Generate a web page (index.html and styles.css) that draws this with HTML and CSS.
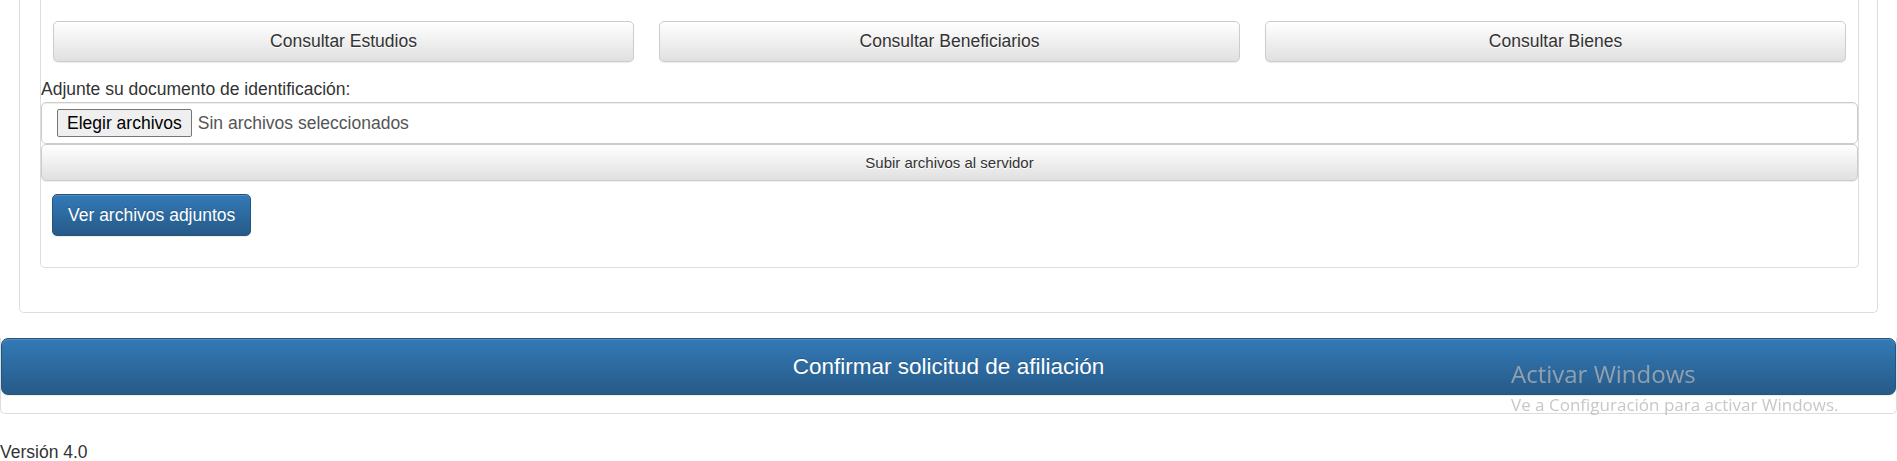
FILE: index.html
```html
<!DOCTYPE html>
<html lang="es">
<head>
<meta charset="utf-8">
<title>Solicitud de afiliación</title>
<link rel="stylesheet" href="styles.css">
</head>
<body>
<div class="page">
  <div class="outer-panel">
    <div class="inner-panel">
      <div class="btn-row">
        <button class="btn btn-default query-btn">Consultar Estudios</button>
        <button class="btn btn-default query-btn">Consultar Beneficiarios</button>
        <button class="btn btn-default query-btn">Consultar Bienes</button>
      </div>
      <label class="doc-label">Adjunte su documento de identificación:</label>
      <div class="file-box">
        <span class="file-btn">Elegir archivos</span>
        <span class="file-text">Sin archivos seleccionados</span>
      </div>
      <button class="btn btn-default upload-btn">Subir archivos al servidor</button>
      <button class="btn btn-primary view-btn">Ver archivos adjuntos</button>
    </div>
  </div>
  <div class="confirm-box">
    <button class="btn btn-primary confirm-btn">Confirmar solicitud de afiliación</button>
  </div>
  <div class="version">Versión 4.0</div>
</div>
<div class="watermark">
  <div class="wm-title">Activar Windows</div>
  <div class="wm-sub">Ve a Configuración para activar Windows.</div>
</div>
</body>
</html>
```
FILE: styles.css
```css
* {
  box-sizing: border-box;
}

html, body {
  margin: 0;
  background: #fff;
}

body {
  font-family: "Liberation Sans", Arial, Helvetica, sans-serif;
  font-size: 17.5px;
  line-height: 25px;
  color: #333;
  overflow: hidden;
}

.outer-panel {
  margin: 0 19px;
  border: 1px solid #dddddd;
  border-top: 0;
  border-radius: 0 0 5px 5px;
  padding: 0 18px 44px 20px;
}

.inner-panel {
  border: 1px solid #dddddd;
  border-top: 0;
  border-radius: 0 0 5px 5px;
  padding: 21px 0 31px;
  display: flex;
  flex-direction: column;
  align-items: flex-start;
}

.btn {
  font-family: inherit;
  font-size: 17.5px;
  line-height: 25px;
  border: 1px solid transparent;
  border-radius: 5px;
  padding: 7px 15px;
  text-align: center;
  white-space: nowrap;
  cursor: pointer;
  margin: 0;
}

.btn-default {
  color: #333;
  background: linear-gradient(to bottom, #ffffff 0%, #e0e0e0 100%);
  border-color: #cccccc;
  box-shadow: inset 0 1px 0 rgba(255, 255, 255, 0.15), 0 1px 1px rgba(0, 0, 0, 0.075);
  text-shadow: 0 1px 0 #fff;
}

.btn-primary {
  color: #fff;
  background: linear-gradient(to bottom, #337ab7 0%, #265a88 100%);
  border-color: #245580;
  box-shadow: inset 0 1px 0 rgba(255, 255, 255, 0.15), 0 1px 1px rgba(0, 0, 0, 0.075);
  text-shadow: 0 -1px 0 rgba(0, 0, 0, 0.2);
}

.btn-row {
  width: 100%;
  display: grid;
  grid-template-columns: repeat(3, 1fr);
  gap: 25px;
  padding: 0 12px;
}

.query-btn {
  height: 41px;
  width: 100%;
}

.doc-label {
  display: block;
  margin-top: 15px;
}

.file-box {
  width: 100%;
  height: 42px;
  border: 1px solid #cccccc;
  border-radius: 5px;
  padding: 0 15px;
  display: flex;
  align-items: center;
  gap: 6px;
  color: #555;
  box-shadow: inset 0 1px 1px rgba(0, 0, 0, 0.075);
}

.file-btn {
  height: 28px;
  line-height: 26px;
  padding: 0 9px;
  border: 1px solid #767676;
  border-radius: 2px;
  background: #efefef;
  color: #000;
}

.upload-btn {
  width: 100%;
  height: 37px;
  font-size: 15px;
  line-height: 22px;
  padding: 6px 12px;
}

.view-btn {
  margin: 13px 0 0 11px;
  height: 42px;
}

.confirm-box {
  margin-top: 25px;
  border: 1px solid #dddddd;
  border-top: 0;
  border-radius: 0 0 5px 5px;
  padding-bottom: 18px;
}

.confirm-btn {
  display: block;
  width: 100%;
  height: 57px;
  font-size: 22.5px;
  line-height: 30px;
  padding: 12px 20px;
  border-radius: 7px;
}

.version {
  margin-top: 26px;
}

.watermark {
  position: fixed;
  left: 1511px;
  top: 358px;
  font-family: "Open Sans", "Noto Sans", sans-serif;
  color: rgba(180, 180, 180, 0.75);
  pointer-events: none;
}

.wm-title {
  font-size: 24px;
  line-height: 32px;
}

.wm-sub {
  font-size: 17px;
  line-height: 21px;
  margin-top: 4px;
}
```
